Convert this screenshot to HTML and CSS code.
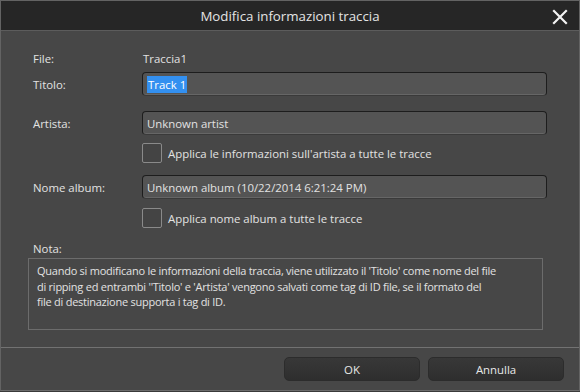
FILE: index.html
```html
<!DOCTYPE html>
<html>
<head>
<meta charset="utf-8">
<link rel="stylesheet" href="styles.css">
</head>
<body>
<div class="window">
  <div class="titlebar">
    <span class="title">Modifica informazioni traccia</span>
    <svg class="close" width="16" height="16" viewBox="0 0 16 16"><path d="M2 2 L14 14 M14 2 L2 14" stroke="#f2f2f2" stroke-width="2.2" stroke-linecap="square"/></svg>
  </div>
  <div class="content">
    <div class="row row-file">
      <span class="label">File:</span>
      <span class="value">Traccia1</span>
    </div>
    <div class="row row-title">
      <span class="label">Titolo:</span>
      <div class="input"><span class="sel">Track 1</span></div>
    </div>
    <div class="row row-artist">
      <span class="label">Artista:</span>
      <div class="input">Unknown artist</div>
    </div>
    <div class="row row-check1">
      <span class="label"></span>
      <label class="check"><span class="box"></span>Applica le informazioni sull'artista a tutte le tracce</label>
    </div>
    <div class="row row-album">
      <span class="label">Nome album:</span>
      <div class="input">Unknown album (10/22/2014 6:21:24 PM)</div>
    </div>
    <div class="row row-check2">
      <span class="label"></span>
      <label class="check"><span class="box"></span>Applica nome album a tutte le tracce</label>
    </div>
    <div class="nota-label">Nota:</div>
    <div class="note">Quando si modificano le informazioni della traccia, viene utilizzato il 'Titolo' come nome del file<br>di ripping ed entrambi ''Titolo' e 'Artista' vengono salvati come tag di ID file, se il formato del<br>file di destinazione supporta i tag di ID.</div>
  </div>
  <div class="footer">
    <button class="btn">OK</button>
    <button class="btn">Annulla</button>
  </div>
</div>
</body>
</html>
```
FILE: styles.css
```css
html, body {
  margin: 0;
  padding: 0;
  background: #3a3a3a;
}
body {
  width: 580px;
  height: 392px;
  overflow: hidden;
  font-family: "Open Sans", "Noto Sans", sans-serif;
  font-size: 11.4px;
  color: #e2e2e2;
}
.window {
  width: 578px;
  height: 389px;
  border: 1px solid #636363;
  border-bottom: 1px solid #6a6a6a;
  background: #474747;
  display: flex;
  flex-direction: column;
}
.titlebar {
  height: 29px;
  background: #262626;
  border-bottom: 1px solid #5c5c5c;
  display: flex;
  align-items: center;
  justify-content: center;
  position: relative;
}
.title {
  font-size: 13.3px;
  color: #e4e4e4;
}
.close {
  position: absolute;
  right: 11px;
  top: 8px;
}
.content {
  padding: 0 32px 0 32px;
  display: flex;
  flex-direction: column;
}
.row {
  display: flex;
  align-items: center;
}
.label {
  width: 109px;
  flex: none;
}
.row-file { height: 16px; margin-top: 19px; }
.value { padding-left: 1px; }
.row-title { margin-top: 6px; }
.row-artist { margin-top: 15px; }
.row-check1 { margin-top: 8px; }
.row-album { margin-top: 12px; }
.row-check2 { margin-top: 9px; }
.input {
  flex: 1;
  box-sizing: border-box;
  height: 24px;
  border: 1px solid #1d1d1d;
  border-bottom-color: #3a3a3a;
  border-radius: 4px;
  background: #545454;
  box-shadow: inset 0 -1px 0 #666;
  padding: 0 4px;
  display: flex;
  align-items: center;
}
.sel {
  background: #3390f0;
  color: #fff;
  padding: 1px 1px;
  line-height: 15px;
}
.check {
  display: flex;
  align-items: center;
  gap: 6px;
}
.box {
  width: 18px;
  height: 18px;
  border: 1px solid #8a8a8a;
  border-radius: 2px;
  background: #444;
  flex: none;
}
.nota-label {
  margin-top: 13px;
  height: 16px;
}
.note {
  margin-top: 1px;
  margin-left: -5px;
  margin-right: 4px;
  border: 1px solid #6c6c6c;
  height: 72px;
  box-sizing: border-box;
  padding: 4px 8px 0 8px;
  line-height: 15.5px;
  font-size: 11px;
  letter-spacing: -0.25px;
  white-space: nowrap;
}
.footer {
  margin-top: auto;
  height: 42px;
  border-top: 1px solid #727272;
  display: flex;
  justify-content: flex-end;
  align-items: center;
  gap: 8px;
  padding-right: 15px;
}
.btn {
  width: 136px;
  height: 24px;
  border: 1px solid #2c2c2c;
  border-radius: 5px;
  background: linear-gradient(#383838, #2e2e2e);
  color: #e8e8e8;
  font-family: inherit;
  font-size: 11.4px;
}
```
